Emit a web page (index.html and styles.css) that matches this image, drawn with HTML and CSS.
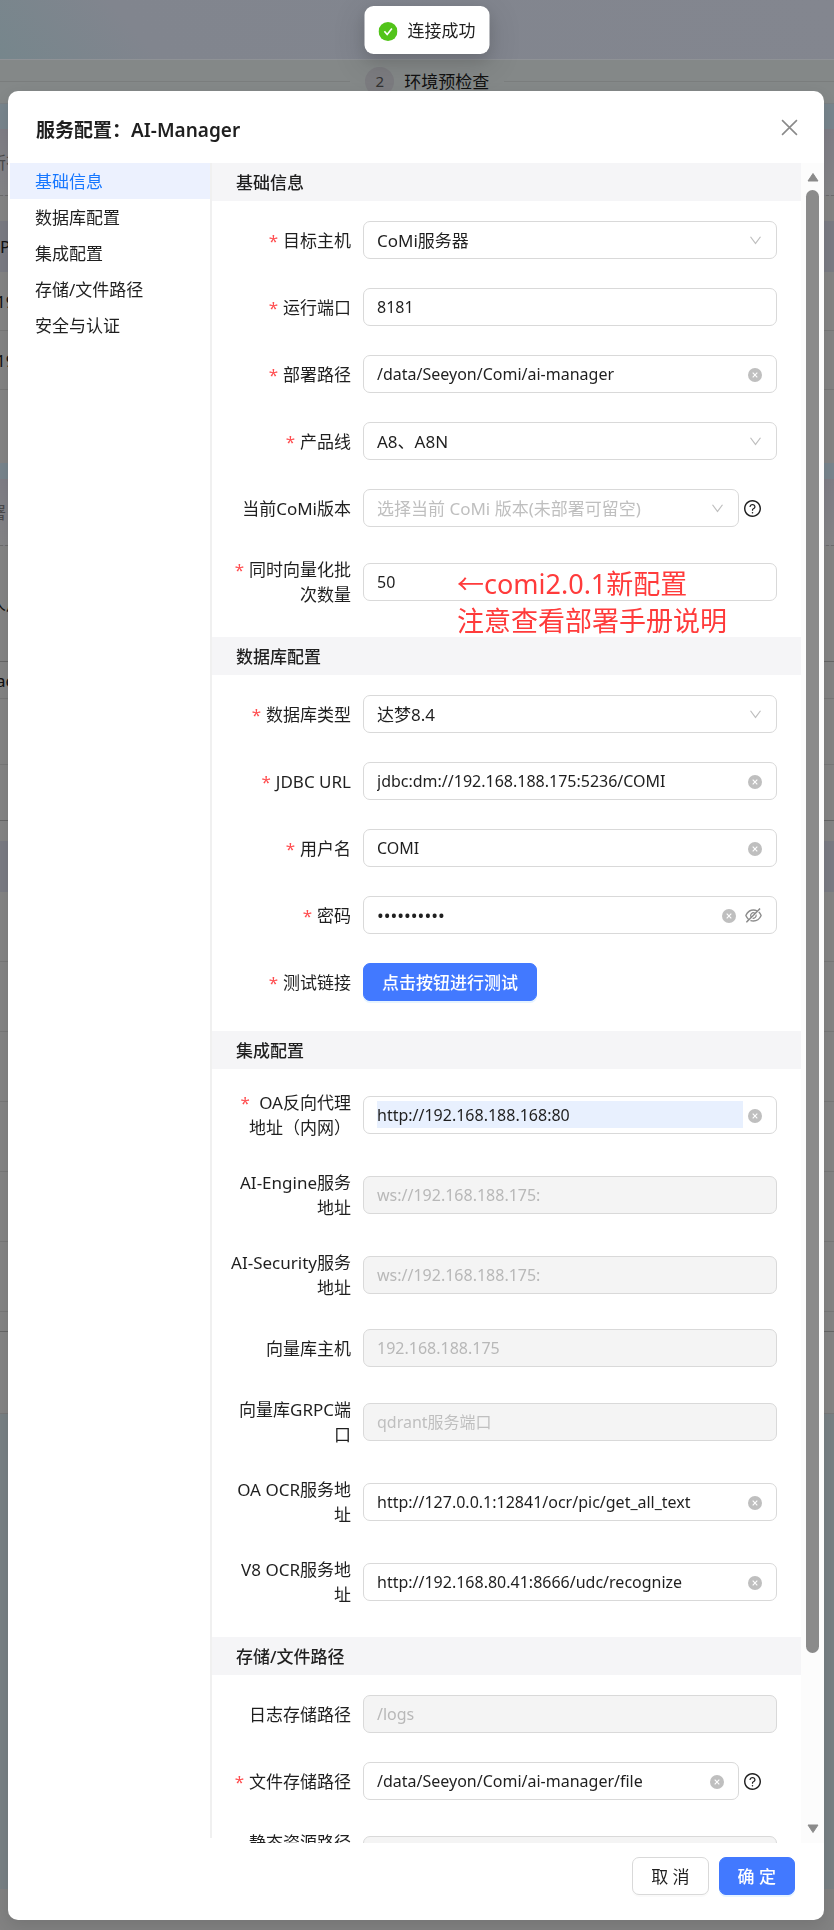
FILE: index.html
```html
<!DOCTYPE html>
<html lang="zh-CN">
<head>
  <meta charset="UTF-8">
  <meta name="viewport" content="width=device-width, initial-scale=1.0">
  <title>服务配置</title>
  <link rel="stylesheet" href="styles.css">
</head>
<body>
  <svg class="sprite" aria-hidden="true">
    <symbol id="icon-down" viewBox="64 64 896 896">
      <path d="M884 256h-75c-5.1 0-9.9 2.5-12.9 6.6L512 654.2 227.9 262.6c-3-4.1-7.8-6.6-12.9-6.6h-75c-6.5 0-10.3 7.4-6.5 12.7l352.6 486.1c12.8 17.6 39 17.6 51.7 0l352.6-486.1c3.9-5.3.1-12.7-6.4-12.7z"/>
    </symbol>
    <symbol id="icon-clear" viewBox="0 0 14 14">
      <circle cx="7" cy="7" r="7"/>
      <path d="M4.7 4.7l4.6 4.6M9.3 4.7L4.7 9.3" stroke="#fff" stroke-width="1.1"/>
    </symbol>
    <symbol id="icon-eye" viewBox="64 64 896 896">
      <path d="M942.2 486.2Q889.47 375.11 816.7 305l-50.88 50.88C807.31 395.53 843.45 447.4 874.7 512 791.5 684.2 673.4 766 512 766q-72.67 0-133.87-22.38L323 798.75Q408 838 512 838q288.3 0 430.2-300.3a60.29 60.29 0 000-51.5zm-63.57-320.64L836 122.88a8 8 0 00-11.32 0L715.31 232.2Q624.86 186 512 186q-288.3 0-430.2 300.3a60.3 60.3 0 000 51.5q56.69 119.4 136.5 191.41L112.48 835a8 8 0 000 11.31L155.17 889a8 8 0 0011.31 0l712.15-712.12a8 8 0 000-11.32zM149.3 512C232.6 339.8 350.7 258 512 258c54.54 0 104.13 9.36 149.12 28.39l-70.3 70.3a176 176 0 00-238.13 238.13l-83.42 83.42C223.1 637.49 183.3 582.28 149.3 512zm246.7 0a112.11 112.11 0 01146.2-106.69L401.31 546.2A112 112 0 01396 512z"/>
      <path d="M508 624c-3.46 0-6.87-.16-10.25-.47l-52.82 52.82a176.09 176.09 0 00227.42-227.42l-52.82 52.82c.31 3.38.47 6.79.47 10.25a111.94 111.94 0 01-112 112z"/>
    </symbol>
    <symbol id="icon-help" viewBox="64 64 896 896">
      <path d="M512 64C264.6 64 64 264.6 64 512s200.6 448 448 448 448-200.6 448-448S759.4 64 512 64zm0 820c-205.4 0-372-166.6-372-372s166.6-372 372-372 372 166.6 372 372-166.6 372-372 372z"/>
      <path d="M623.6 316.7C593.6 290.4 554 276 512 276s-81.6 14.5-111.6 40.7C369.2 344 352 380.7 352 420v7.6c0 4.4 3.6 8 8 8h48c4.4 0 8-3.6 8-8V420c0-44.1 43.1-80 96-80s96 35.9 96 80c0 31.1-22 59.6-56.1 72.7-21.2 8.1-39.2 22.3-52.1 40.9-13.1 19-19.9 41.8-19.9 64.9V620c0 4.4 3.6 8 8 8h48c4.4 0 8-3.6 8-8v-22.7a48.3 48.3 0 0130.9-44.8c59-22.7 97.1-74.7 97.1-132.5.1-39.3-17.1-76-48.3-103.3zM472 732a40 40 0 1080 0 40 40 0 10-80 0z"/>
    </symbol>
  </svg>

  <!-- page behind the dialog -->
  <div class="page">
    <div class="page-top"></div>
    <div class="steps">
      <span class="step-line"></span>
      <span class="step-num">2</span>
      <span class="step-title">环境预检查</span>
      <span class="step-line"></span>
    </div>
    <div class="bg bg-blue h25"></div>
    <div class="bg bg-head h67 dashed"><span class="cut muted">所有</span></div>
    <div class="bg h25"></div>
    <div class="bg bg-th h51"><span>P</span></div>
    <div class="bg h59 line"><span class="ip">19</span></div>
    <div class="bg h59 line"><span class="ip">19</span></div>
    <div class="bg h73"></div>
    <div class="bg bg-blue h16"></div>
    <div class="bg bg-head h67 dashed"><span class="cut muted">署</span></div>
    <div class="bg h116 line dark"><span class="cut">人用</span></div>
    <div class="bg h37 line"><span class="ip">ac</span></div>
    <div class="bg h66 line"></div>
    <div class="bg h56 line dark"></div>
    <div class="bg h20"></div>
    <div class="bg bg-th h51"></div>
    <div class="bg h70 line"></div>
    <div class="bg h70 line"></div>
    <div class="bg h70 line"></div>
    <div class="bg h70 line"></div>
    <div class="bg h70 line"></div>
    <div class="bg h70 line"></div>
    <div class="bg h20 line dark"></div>
    <div class="bg h82 line"></div>
    <div class="bg bg-body"></div>
    <div class="bg bg-foot"></div>
  </div>

  <div class="message" role="status">
    <svg class="message-icon" viewBox="0 0 20 20" aria-hidden="true">
      <circle cx="10" cy="10" r="10" fill="#52c41a"/>
      <path d="M6.2 9.8l2.9 3.4 5-6.4" fill="none" stroke="#fff" stroke-width="1.7"/>
    </svg>
    <span>连接成功</span>
  </div>

  <div class="modal" role="dialog" aria-labelledby="modal-title">
    <header class="modal-header">
      <h1 class="modal-title" id="modal-title">服务配置：AI-Manager</h1>
      <button class="modal-close" type="button" aria-label="关闭">
        <svg viewBox="0 0 16 16"><path d="M1 1l14 14M15 1L1 15"/></svg>
      </button>
    </header>

    <div class="modal-body">
      <nav class="menu">
        <a class="menu-item active" href="#base">基础信息</a>
        <a class="menu-item" href="#database">数据库配置</a>
        <a class="menu-item" href="#integration">集成配置</a>
        <a class="menu-item" href="#storage">存储/文件路径</a>
        <a class="menu-item" href="#security">安全与认证</a>
      </nav>

      <form class="content" id="config-form">
        <section class="section" id="base">
          <h2 class="section-title">基础信息</h2>
          <div class="section-body">
            <div class="form-item">
              <label class="required" for="host">目标主机</label>
              <div class="field">
                <select id="host"><option>CoMi服务器</option></select>
                <svg class="arrow"><use href="#icon-down"/></svg>
              </div>
            </div>
            <div class="form-item">
              <label class="required" for="port">运行端口</label>
              <div class="field"><input id="port" type="text" value="8181"></div>
            </div>
            <div class="form-item">
              <label class="required" for="path">部署路径</label>
              <div class="field">
                <input id="path" type="text" value="/data/Seeyon/Comi/ai-manager">
                <button class="clear" type="button" aria-label="清除"><svg><use href="#icon-clear"/></svg></button>
              </div>
            </div>
            <div class="form-item">
              <label class="required" for="product">产品线</label>
              <div class="field">
                <select id="product"><option>A8、A8N</option></select>
                <svg class="arrow"><use href="#icon-down"/></svg>
              </div>
            </div>
            <div class="form-item has-help">
              <label for="version">当前CoMi版本</label>
              <div class="field">
                <select class="placeholder" id="version"><option>选择当前 CoMi 版本(未部署可留空)</option></select>
                <svg class="arrow"><use href="#icon-down"/></svg>
              </div>
              <svg class="help"><use href="#icon-help"/></svg>
            </div>
            <div class="form-item">
              <label class="required" for="batch">同时向量化批次数量</label>
              <div class="field">
                <input id="batch" type="text" value="50">
                <p class="note">←comi2.0.1新配置<br>注意查看部署手册说明</p>
              </div>
            </div>
          </div>
        </section>

        <section class="section" id="database">
          <h2 class="section-title">数据库配置</h2>
          <div class="section-body">
            <div class="form-item">
              <label class="required" for="dbtype">数据库类型</label>
              <div class="field">
                <select id="dbtype"><option>达梦8.4</option></select>
                <svg class="arrow"><use href="#icon-down"/></svg>
              </div>
            </div>
            <div class="form-item">
              <label class="required" for="jdbc">JDBC URL</label>
              <div class="field">
                <input id="jdbc" type="text" value="jdbc:dm://192.168.188.175:5236/COMI">
                <button class="clear" type="button" aria-label="清除"><svg><use href="#icon-clear"/></svg></button>
              </div>
            </div>
            <div class="form-item">
              <label class="required" for="user">用户名</label>
              <div class="field">
                <input id="user" type="text" value="COMI">
                <button class="clear" type="button" aria-label="清除"><svg><use href="#icon-clear"/></svg></button>
              </div>
            </div>
            <div class="form-item">
              <label class="required" for="password">密码</label>
              <div class="field">
                <input id="password" type="password" value="comi123456">
                <button class="clear" type="button" aria-label="清除"><svg><use href="#icon-clear"/></svg></button>
                <button class="eye" type="button" aria-label="显示密码"><svg><use href="#icon-eye"/></svg></button>
              </div>
            </div>
            <div class="form-item">
              <label class="required" for="test">测试链接</label>
              <div><button class="btn btn-primary" id="test" type="button">点击按钮进行测试</button></div>
            </div>
          </div>
        </section>

        <section class="section" id="integration">
          <h2 class="section-title">集成配置</h2>
          <div class="section-body">
            <div class="form-item">
              <label class="required" for="oa">&nbsp;OA反向代理地址（内网）</label>
              <div class="field">
                <input class="autofill" id="oa" type="text" value="http://192.168.188.168:80">
                <button class="clear" type="button" aria-label="清除"><svg><use href="#icon-clear"/></svg></button>
              </div>
            </div>
            <div class="form-item">
              <label for="engine">AI-Engine服务地址</label>
              <div class="field disabled"><input id="engine" type="text" value="ws://192.168.188.175:" disabled></div>
            </div>
            <div class="form-item">
              <label for="sec">AI-Security服务地址</label>
              <div class="field disabled"><input id="sec" type="text" value="ws://192.168.188.175:" disabled></div>
            </div>
            <div class="form-item">
              <label for="vhost">向量库主机</label>
              <div class="field disabled"><input id="vhost" type="text" value="192.168.188.175" disabled></div>
            </div>
            <div class="form-item">
              <label for="grpc">向量库GRPC端口</label>
              <div class="field disabled"><input id="grpc" type="text" placeholder="qdrant服务端口" disabled></div>
            </div>
            <div class="form-item">
              <label for="oaocr">OA OCR服务地址</label>
              <div class="field">
                <input id="oaocr" type="text" value="http://127.0.0.1:12841/ocr/pic/get_all_text">
                <button class="clear" type="button" aria-label="清除"><svg><use href="#icon-clear"/></svg></button>
              </div>
            </div>
            <div class="form-item">
              <label for="v8ocr">V8 OCR服务地址</label>
              <div class="field">
                <input id="v8ocr" type="text" value="http://192.168.80.41:8666/udc/recognize">
                <button class="clear" type="button" aria-label="清除"><svg><use href="#icon-clear"/></svg></button>
              </div>
            </div>
          </div>
        </section>

        <section class="section" id="storage">
          <h2 class="section-title">存储/文件路径</h2>
          <div class="section-body">
            <div class="form-item">
              <label for="logs">日志存储路径</label>
              <div class="field disabled"><input id="logs" type="text" value="/logs" disabled></div>
            </div>
            <div class="form-item has-help">
              <label class="required" for="file">文件存储路径</label>
              <div class="field">
                <input id="file" type="text" value="/data/Seeyon/Comi/ai-manager/file">
                <button class="clear" type="button" aria-label="清除"><svg><use href="#icon-clear"/></svg></button>
              </div>
              <svg class="help"><use href="#icon-help"/></svg>
            </div>
            <div class="form-item">
              <label for="static">静态资源路径<br>前缀</label>
              <div class="field disabled"><input id="static" type="text" disabled></div>
            </div>
          </div>
        </section>
      </form>

      <div class="scrollbar" aria-hidden="true">
        <svg class="scroll-arrow" viewBox="0 0 12 10"><path d="M6 1.5L11 9H1z"/></svg>
        <div class="scroll-track"><div class="scroll-thumb"></div></div>
        <svg class="scroll-arrow" viewBox="0 0 12 10"><path d="M6 8.5L11 1H1z"/></svg>
      </div>
    </div>

    <footer class="modal-footer">
      <button class="btn" type="button">取 消</button>
      <button class="btn btn-primary" type="submit" form="config-form">确 定</button>
    </footer>
  </div>
</body>
</html>
```

FILE: styles.css
```css
* {
  margin: 0;
  padding: 0;
  box-sizing: border-box;
}
body {
  min-height: 100vh;
  font-family: "Noto Sans", "Noto Sans CJK SC", sans-serif;
  font-size: 17px;
  line-height: 25px;
  color: #1f1f1f;
  background: #808080;
}
button, input, select {
  font: inherit;
  color: inherit;
  border: 0;
  background: none;
  outline: none;
}
button {
  cursor: pointer;
}
.sprite {
  display: none;
}

/* page behind */
.page {
  display: flex;
  flex-direction: column;
  height: 100vh;
  overflow: hidden;
  background: #848484;
}
.page-top {
  flex: none;
  height: 60px;
  border-bottom: 1px solid #8f9296;
  background: linear-gradient(50deg, #76868c, #81858e 18%, #83868f);
}
.steps {
  flex: none;
  display: flex;
  align-items: center;
  height: 44px;
  border-bottom: 1px solid #7b8084;
  background: #848888;
  color: #111;
}
.step-line {
  flex: 1;
  height: 1px;
  background: #7a7d7d;
}
.step-line:first-child {
  flex: 0 0 42%;
}
.step-num {
  width: 29px;
  height: 29px;
  margin: 0 10px 0 15px;
  border-radius: 50%;
  background: #7c7c80;
  color: #333;
  font-size: 15px;
  line-height: 29px;
  text-align: center;
}
.step-title {
  margin-right: 15px;
}
.bg {
  flex: none;
  display: flex;
  align-items: center;
  overflow: hidden;
  white-space: nowrap;
  color: #111;
}
.bg .cut {
  margin-left: -11px;
}
.bg .ip {
  margin-left: -4px;
}
.bg .muted {
  color: #4a4a4c;
}
.bg-blue { background: #78858d; }
.bg-head { background: linear-gradient(#7f7e86, #858587); }
.bg-th { background: #7a7b83; }
.line { border-bottom: 1px solid #787878; }
.line.dark { border-bottom-color: #666; }
.dashed { border-bottom: 1px dashed #6c6c6c; }
.h16 { height: 16px; }
.h20 { height: 20px; }
.h25 { height: 25px; }
.h37 { height: 37px; }
.h51 { height: 51px; }
.h56 { height: 56px; }
.h59 { height: 59px; }
.h66 { height: 66px; }
.h67 { height: 67px; }
.h70 { height: 70px; }
.h73 { height: 73px; }
.h82 { height: 82px; }
.h116 { height: 116px; }
.bg-body {
  flex: 1;
  background: #788084;
}
.bg-foot {
  height: 41px;
  background: #828282;
}

/* toast */
.message {
  position: fixed;
  z-index: 2;
  top: 6px;
  left: 50%;
  transform: translateX(-50%);
  margin-left: 10px;
  display: flex;
  align-items: center;
  gap: 10px;
  padding: 13px 14px 11px;
  line-height: 24px;
  border-radius: 9px;
  background: #fff;
  box-shadow: 0 6px 16px rgba(0, 0, 0, 0.12), 0 9px 28px 8px rgba(0, 0, 0, 0.08);
}
.message-icon {
  width: 19px;
  height: 19px;
}

/* dialog */
.modal {
  position: fixed;
  top: 91px;
  right: 10px;
  bottom: 10px;
  left: 8px;
  display: flex;
  flex-direction: column;
  border-radius: 10px;
  background: #fff;
  box-shadow: 0 6px 16px rgba(0, 0, 0, 0.1);
}
.modal-header {
  display: flex;
  align-items: center;
  justify-content: space-between;
  height: 72px;
  padding: 6px 26px 0 28px;
}
.modal-title {
  font-size: 19px;
  font-weight: 600;
}
.modal-close {
  width: 17px;
  height: 25px;
  padding-bottom: 5px;
}
.modal-close svg {
  display: block;
  width: 17px;
  height: 17px;
  fill: none;
  stroke: #8a8a8a;
  stroke-width: 1.5;
}
.modal-body {
  flex: 1;
  min-height: 0;
  display: flex;
  overflow: hidden;
}
.menu {
  flex: none;
  width: 204px;
  margin: 0 0 5px;
  padding-left: 2px;
  border-right: 2px solid #f0f0f0;
}
.menu-item {
  display: block;
  height: 36px;
  padding-left: 25px;
  line-height: 38px;
  color: #1f1f1f;
  text-decoration: none;
}
.menu-item.active {
  background: #ecf1fe;
  color: #1677ff;
}
.content {
  flex: 1;
  min-width: 0;
  overflow: hidden;
}
.section-title {
  height: 38px;
  padding-left: 24px;
  background: #f5f5f7;
  font-size: 17px;
  font-weight: 500;
  line-height: 40px;
}
.section-body {
  padding: 20px 24px 1px 13px;
}
.form-item {
  display: grid;
  grid-template-columns: 126px 1fr;
  column-gap: 12px;
  align-items: center;
  margin-bottom: 29px;
}
.form-item.has-help {
  grid-template-columns: 126px 1fr 26px;
}
.form-item label {
  padding-top: 1px;
  text-align: right;
}
.required::before {
  content: "*";
  margin-right: 5px;
  color: #ff4d4f;
}
.field {
  position: relative;
  display: flex;
  align-items: center;
  height: 38px;
  padding: 0 14px 0 13px;
  border: 1px solid #d9d9d9;
  border-radius: 7px;
  background: #fff;
}
.field.disabled {
  background: #f4f4f4;
  color: #b8b8b8;
}
.field input,
.field select {
  flex: 1;
  min-width: 0;
  height: 27px;
  font-size: 16px;
}
.field select {
  appearance: none;
  font-size: 17px;
}
.field input[type="password"] {
  font-size: 18px;
}
.field .placeholder,
.field input::placeholder {
  color: #bfbfbf;
}
.field .autofill {
  background: #e8f0fe;
}
.arrow {
  flex: none;
  width: 13px;
  height: 13px;
  fill: #bfbfbf;
}
.clear,
.eye {
  flex: none;
  display: flex;
  margin-left: 5px;
  padding-top: 2px;
}
.clear svg {
  width: 14px;
  height: 14px;
  fill: #bfbfbf;
}
.eye {
  margin-left: 9px;
  padding-top: 0;
}
.eye svg {
  width: 17px;
  height: 17px;
  fill: #8c8c8c;
}
.help {
  width: 17px;
  height: 17px;
  margin-left: -7px;
  fill: #1f1f1f;
}
.note {
  position: absolute;
  top: 1px;
  left: 93px;
  color: #ff3b3b;
  font-size: 27px;
  line-height: 37px;
  white-space: nowrap;
}
.btn {
  height: 38px;
  padding: 0 18px;
  border: 1px solid #d9d9d9;
  border-radius: 7px;
  background: #fff;
  box-shadow: 0 2px 0 rgba(0, 0, 0, 0.02);
}
.btn-primary {
  border-color: #4279ff;
  background: #4279ff;
  box-shadow: 0 2px 0 rgba(5, 145, 255, 0.1);
  color: #fff;
  font-weight: 500;
}

.scrollbar {
  flex: none;
  display: flex;
  flex-direction: column;
  align-items: center;
  width: 23px;
  padding: 9px 0;
  background: #fcfcfc;
}
.scroll-arrow {
  width: 12px;
  height: 10px;
  fill: #8b8b8b;
  stroke: #8b8b8b;
  stroke-linejoin: round;
}
.scroll-track {
  flex: 1;
  padding: 8px 0;
}
.scroll-thumb {
  width: 13px;
  height: 90%;
  border-radius: 7px;
  background: #8b8b8b;
}
.modal-footer {
  display: flex;
  justify-content: flex-end;
  gap: 10px;
  padding: 14px 29px 25px;
}
```
